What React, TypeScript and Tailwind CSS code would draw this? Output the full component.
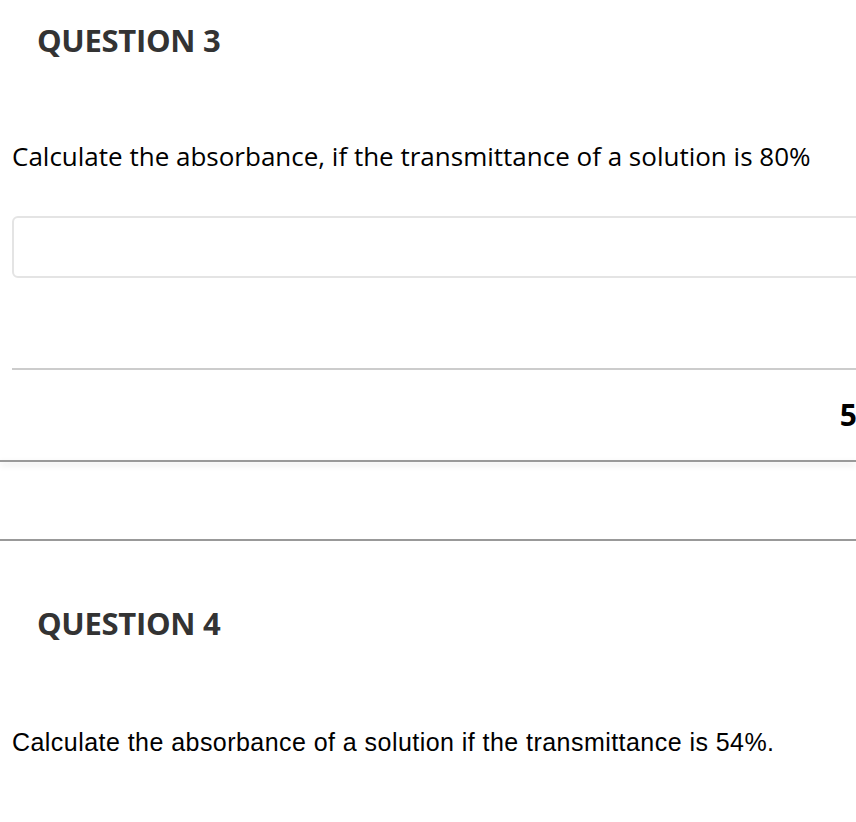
import React from "react";

export default function App() {
  return (
    <div className="w-[856px] h-[822px] bg-white overflow-hidden" style={{ fontFamily: '"Open Sans", sans-serif' }}>
      <div className="pl-[37px] pt-[20px] h-[130px]">
        <h2 className="text-[31px] leading-[40px] font-bold text-[#333333] tracking-[-0.3px]">QUESTION 3</h2>
      </div>
      <div className="pl-[12px] pt-[8px]">
        <p className="text-[26px] leading-[36px] text-black whitespace-nowrap">Calculate the absorbance, if the transmittance of a solution is 80%</p>
      </div>
      <div className="pl-[12px] pt-[42px]">
        <div className="h-[62px] w-[900px] border-2 border-[#e4e4e4] rounded-[6px]" />
      </div>
      <div className="pl-[12px] pt-[90px]">
        <div className="h-[2px] bg-[#cccccc]" />
      </div>
      <div className="h-[90px] flex items-center justify-end">
        <span className="text-[30px] leading-[36px] font-bold text-black translate-x-[1px]">5</span>
      </div>
      <div className="h-[2px] bg-[#999999] shadow-[0_3px_6px_rgba(0,0,0,0.15)]" />
      <div className="h-[77px]" />
      <div className="h-[2px] bg-[#999999]" />
      <div className="pl-[37px] pt-[62px]">
        <h2 className="text-[31px] leading-[40px] font-bold text-[#333333] tracking-[-0.3px]">QUESTION 4</h2>
      </div>
      <div className="pl-[12px] pt-[84px]">
        <p className="text-[25px] leading-[30px] text-black tracking-[0.45px] whitespace-nowrap" style={{ fontFamily: '"Liberation Sans", Arial, sans-serif' }}>Calculate the absorbance of a solution if the transmittance is 54%.</p>
      </div>
    </div>
  );
}
